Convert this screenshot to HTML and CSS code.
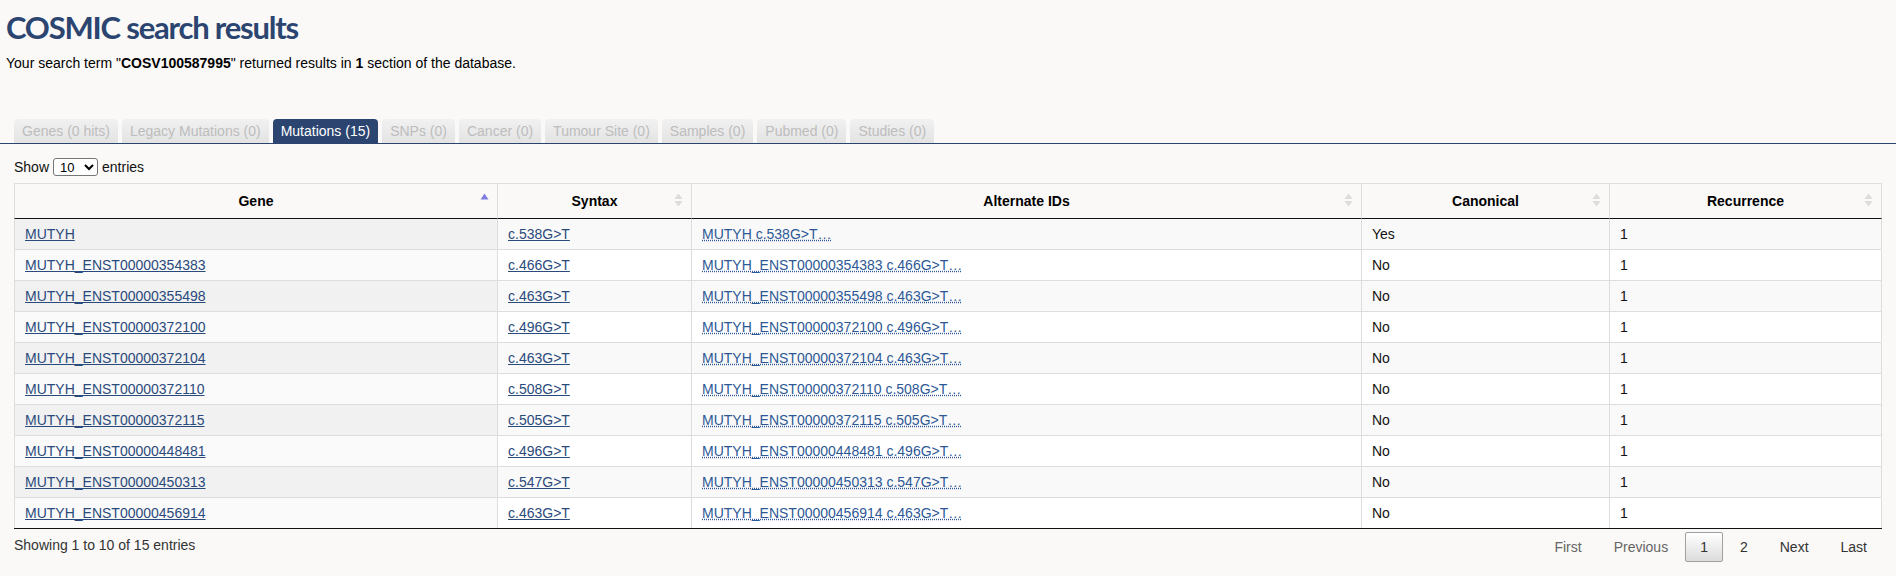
FILE: index.html
```html
<!DOCTYPE html>
<html lang="en">
<head>
<meta charset="utf-8">
<title>COSMIC search results</title>
<link rel="stylesheet" href="styles.css">
</head>
<body>
<header class="page-head">
  <h1 class="page-title">COSMIC search results</h1>
  <p class="summary">Your search term "<b>COSV100587995</b>" returned results in <b>1</b> section of the database.</p>
</header>

<nav class="tabs">
  <span class="tab">Genes (0 hits)</span>
  <span class="tab">Legacy Mutations (0)</span>
  <span class="tab active">Mutations (15)</span>
  <span class="tab">SNPs (0)</span>
  <span class="tab">Cancer (0)</span>
  <span class="tab">Tumour Site (0)</span>
  <span class="tab">Samples (0)</span>
  <span class="tab">Pubmed (0)</span>
  <span class="tab">Studies (0)</span>
</nav>

<section class="results">
  <div class="length">
    <span>Show</span>
    <select class="length-select">
      <option>10</option>
      <option>25</option>
      <option>50</option>
      <option>100</option>
    </select>
    <span>entries</span>
  </div>

  <table class="grid">
    <thead>
      <tr>
        <th class="c-gene">Gene<svg class="sort" viewBox="0 0 9 14" width="9" height="14"><polygon class="asc" points="0.5,6.5 4.5,0.5 8.5,6.5"/></svg></th>
        <th class="c-syntax">Syntax<svg class="sort" viewBox="0 0 9 14" width="9" height="14"><polygon class="both" points="0.5,6 4.5,0.5 8.5,6"/><polygon class="both" points="0.5,8 4.5,13.5 8.5,8"/></svg></th>
        <th class="c-alt">Alternate IDs<svg class="sort" viewBox="0 0 9 14" width="9" height="14"><polygon class="both" points="0.5,6 4.5,0.5 8.5,6"/><polygon class="both" points="0.5,8 4.5,13.5 8.5,8"/></svg></th>
        <th class="c-canon">Canonical<svg class="sort" viewBox="0 0 9 14" width="9" height="14"><polygon class="both" points="0.5,6 4.5,0.5 8.5,6"/><polygon class="both" points="0.5,8 4.5,13.5 8.5,8"/></svg></th>
        <th class="c-rec">Recurrence<svg class="sort" viewBox="0 0 9 14" width="9" height="14"><polygon class="both" points="0.5,6 4.5,0.5 8.5,6"/><polygon class="both" points="0.5,8 4.5,13.5 8.5,8"/></svg></th>
      </tr>
    </thead>
    <tbody>
      <tr class="odd"><td><a href="#">MUTYH</a></td><td><a href="#">c.538G&gt;T</a></td><td><a class="abbr" href="#">MUTYH c.538G&gt;T&hellip;</a></td><td>Yes</td><td>1</td></tr>
      <tr class="even"><td><a href="#">MUTYH_ENST00000354383</a></td><td><a href="#">c.466G&gt;T</a></td><td><a class="abbr" href="#">MUTYH_ENST00000354383 c.466G&gt;T&hellip;</a></td><td>No</td><td>1</td></tr>
      <tr class="odd"><td><a href="#">MUTYH_ENST00000355498</a></td><td><a href="#">c.463G&gt;T</a></td><td><a class="abbr" href="#">MUTYH_ENST00000355498 c.463G&gt;T&hellip;</a></td><td>No</td><td>1</td></tr>
      <tr class="even"><td><a href="#">MUTYH_ENST00000372100</a></td><td><a href="#">c.496G&gt;T</a></td><td><a class="abbr" href="#">MUTYH_ENST00000372100 c.496G&gt;T&hellip;</a></td><td>No</td><td>1</td></tr>
      <tr class="odd"><td><a href="#">MUTYH_ENST00000372104</a></td><td><a href="#">c.463G&gt;T</a></td><td><a class="abbr" href="#">MUTYH_ENST00000372104 c.463G&gt;T&hellip;</a></td><td>No</td><td>1</td></tr>
      <tr class="even"><td><a href="#">MUTYH_ENST00000372110</a></td><td><a href="#">c.508G&gt;T</a></td><td><a class="abbr" href="#">MUTYH_ENST00000372110 c.508G&gt;T&hellip;</a></td><td>No</td><td>1</td></tr>
      <tr class="odd"><td><a href="#">MUTYH_ENST00000372115</a></td><td><a href="#">c.505G&gt;T</a></td><td><a class="abbr" href="#">MUTYH_ENST00000372115 c.505G&gt;T&hellip;</a></td><td>No</td><td>1</td></tr>
      <tr class="even"><td><a href="#">MUTYH_ENST00000448481</a></td><td><a href="#">c.496G&gt;T</a></td><td><a class="abbr" href="#">MUTYH_ENST00000448481 c.496G&gt;T&hellip;</a></td><td>No</td><td>1</td></tr>
      <tr class="odd"><td><a href="#">MUTYH_ENST00000450313</a></td><td><a href="#">c.547G&gt;T</a></td><td><a class="abbr" href="#">MUTYH_ENST00000450313 c.547G&gt;T&hellip;</a></td><td>No</td><td>1</td></tr>
      <tr class="even"><td><a href="#">MUTYH_ENST00000456914</a></td><td><a href="#">c.463G&gt;T</a></td><td><a class="abbr" href="#">MUTYH_ENST00000456914 c.463G&gt;T&hellip;</a></td><td>No</td><td>1</td></tr>
    </tbody>
  </table>

  <div class="table-foot">
    <div class="info">Showing 1 to 10 of 15 entries</div>
    <div class="paginate">
      <span class="pg disabled">First</span>
      <span class="pg disabled">Previous</span>
      <span class="pg current">1</span>
      <span class="pg">2</span>
      <span class="pg">Next</span>
      <span class="pg">Last</span>
    </div>
  </div>
</section>
</body>
</html>
```

FILE: styles.css
```css
html, body {
  margin: 0;
  padding: 0;
}
body {
  background: #faf9f7;
  color: #111;
  font-family: "Liberation Sans", Arial, sans-serif;
  font-size: 14px;
  line-height: 16px;
}

.page-head {
  padding: 7px 6px 0;
}
.page-title {
  margin: 0;
  font-family: Lato, "Noto Sans", sans-serif;
  font-weight: 700;
  font-size: 31px;
  line-height: 40px;
  letter-spacing: -1.2px;
  color: #2b4570;
}
.summary {
  margin: 8px 0 0;
  font-size: 14px;
  line-height: 16px;
  color: #000;
}

.tabs {
  display: flex;
  gap: 4px;
  margin-top: 48px;
  padding: 0 14px;
  border-bottom: 1px solid #2b4570;
}
.tab {
  padding: 4px 8px;
  font-size: 14px;
  line-height: 16px;
  color: #bdbdbd;
  background: linear-gradient(#f1f1f1, #e3e3e3);
  border-radius: 4px 4px 0 0;
}
.tab.active {
  background: #2b4570;
  color: #fff;
}

.results {
  padding: 0 14px;
}
.length {
  display: flex;
  align-items: center;
  gap: 4px;
  height: 18px;
  margin-top: 14px;
  font-size: 14px;
}
.length-select {
  width: 45px;
  height: 18px;
  padding: 0 2px;
  font-family: "Liberation Sans", Arial, sans-serif;
  font-size: 13px;
  background: #fff;
  border: 1px solid #767676;
  border-radius: 3px;
  color: #000;
}

.grid {
  margin-top: 7px;
  width: 1868px;
  table-layout: fixed;
  border-collapse: separate;
  border-spacing: 0;
  border-bottom: 1px solid #111;
}
.grid th,
.grid td {
  box-sizing: border-box;
  border-right: 1px solid #ddd;
  text-align: left;
}
.grid th:first-child,
.grid td:first-child {
  border-left: 1px solid #ddd;
}
.grid th {
  position: relative;
  padding: 9px 18px;
  border-top: 1px solid #ddd;
  border-bottom: 1px solid #111;
  font-weight: 700;
  text-align: center;
  color: #000;
}
.c-gene { width: 484px; }
.c-syntax { width: 194px; }
.c-alt { width: 670px; }
.c-canon { width: 248px; }
.c-rec { width: 272px; }

.sort {
  position: absolute;
  right: 8px;
  top: 9px;
}
.sort .asc { fill: #7f7fe1; }
.sort .both { fill: #dcdcdc; }

.grid td {
  padding: 7px 10px;
  border-top: 1px solid #ddd;
  color: #111;
}
.grid tbody tr:first-child td {
  border-top: none;
}
.grid tr.odd td { background: #f9f9f9; }
.grid tr.odd td:first-child { background: #f1f1f1; }
.grid tr.even td { background: #fff; }
.grid tr.even td:first-child { background: #fafafa; }

.grid a {
  color: #2b4a7c;
  text-decoration: underline;
}
.grid a.abbr {
  color: #2d5896;
  text-decoration: underline dotted;
}

.table-foot {
  display: flex;
  justify-content: space-between;
  align-items: flex-start;
  padding-top: 3px;
}
.info {
  padding-top: 5px;
  color: #333;
}
.paginate {
  display: flex;
}
.pg {
  margin-left: 2px;
  padding: 6px 14px;
  border: 1px solid transparent;
  border-radius: 2px;
  color: #333;
}
.pg.disabled {
  color: #666;
}
.pg.current {
  border-color: #a0a0a0;
  background: linear-gradient(#fff, #dcdcdc);
}
```
